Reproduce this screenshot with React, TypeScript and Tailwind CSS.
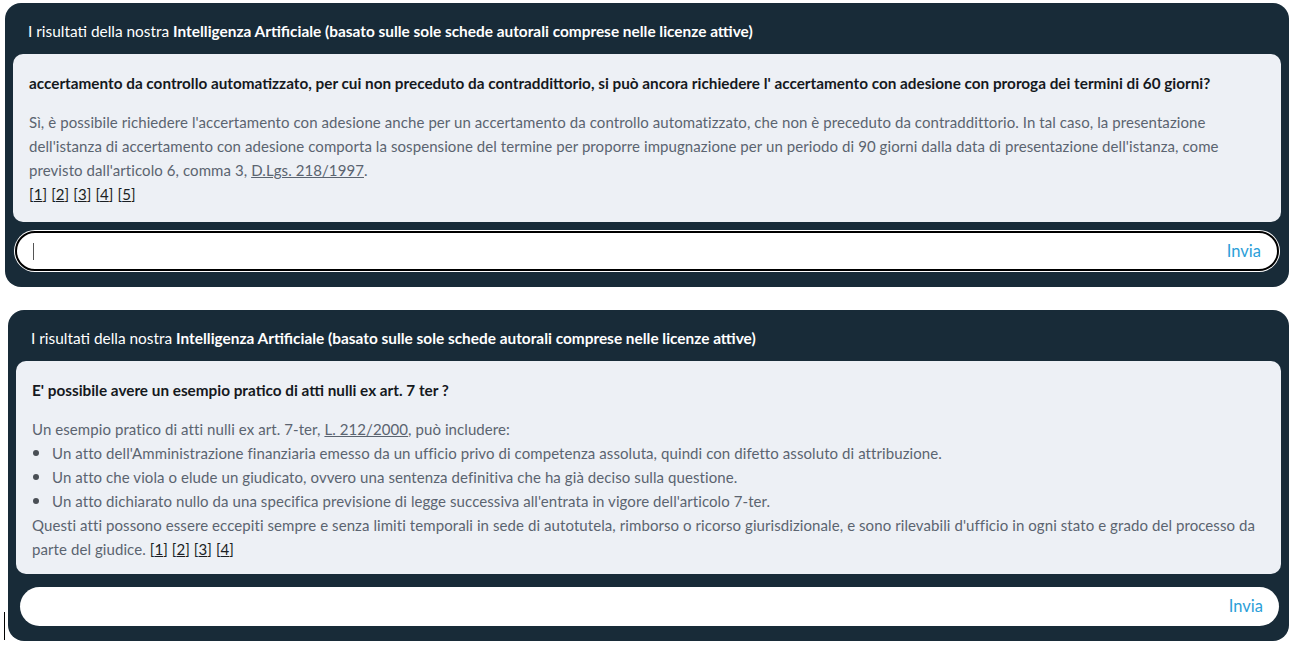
import React from 'react';

const font = { fontFamily: 'Lato, "Noto Sans", sans-serif' };

interface PanelProps {
  question: string;
  children: React.ReactNode;
  focused?: boolean;
  inputClass?: string;
  cardClass?: string;
  panelClass?: string;
}

const Ref: React.FC<{ n: number }> = ({ n }) => (
  <span className="text-[#1b1f24]">
    [<span className="underline">{n}</span>]
  </span>
);

const Bullet: React.FC<{ children: React.ReactNode }> = ({ children }) => (
  <li className="flex items-center">
    <span className="w-[6px] h-[6px] rounded-full bg-[#4a4f55] ml-px mr-[13px] shrink-0" />
    <span>{children}</span>
  </li>
);

const AiPanel: React.FC<PanelProps> = ({ question, children, focused, inputClass, cardClass, panelClass }) => {
  return (
    <div className={`bg-[#182b38] rounded-2xl px-2 ${panelClass ?? 'pb-4'}`}>
      <div className="text-white text-[15.4px] pl-[15px] pt-[18px] pb-[13px] leading-5">
        I risultati della nostra <b>Intelligenza Artificiale (basato sulle sole schede autorali comprese nelle licenze attive)</b>
      </div>
      <div className={`bg-[#edf0f5] rounded-[10px] px-4 pt-[19px] ${cardClass ?? 'pb-4'}`}>
        <div className="text-[15.3px] font-bold text-[#15191d] leading-5 mb-[17px]">{question}</div>
        <div className="text-[15px] tracking-[0.08px] text-[#5b6470] leading-6">{children}</div>
      </div>
      <div
        className={`h-10 bg-white rounded-full flex items-center pl-4 pr-4 ${inputClass ?? ''} ${
          focused ? 'border-2 border-black ring-1 ring-white' : ''
        }`}
      >
        {focused && <span className="w-px h-[17px] bg-[#555]" />}
        <span className="flex-1" />
        <span className="text-[#2b9ed8] text-[16.5px]">Invia</span>
      </div>
    </div>
  );
};

export default function App() {
  return (
    <div className="relative w-[1292px] h-[645px] bg-white" style={font}>
      <div className="pt-[3px] pl-[5px] pr-[3px]">
        <AiPanel
          focused
          inputClass="mt-[9px] ml-0.5 mr-0.5"
          question="accertamento da controllo automatizzato, per cui non preceduto da contraddittorio, si può ancora richiedere l' accertamento con adesione con proroga dei termini di 60 giorni?"
        >
          Sì, è possibile richiedere l'accertamento con adesione anche per un accertamento da controllo automatizzato, che non è preceduto da contraddittorio. In tal caso, la presentazione
          <br />
          dell'istanza di accertamento con adesione comporta la sospensione del termine per proporre impugnazione per un periodo di 90 giorni dalla data di presentazione dell'istanza, come
          <br />
          previsto dall'articolo 6, comma 3, <span className="underline">D.Lgs. 218/1997</span>.
          <br />
          <span className="flex gap-1">
            <Ref n={1} /> <Ref n={2} /> <Ref n={3} /> <Ref n={4} /> <Ref n={5} />
          </span>
        </AiPanel>
      </div>
      <div className="pt-[23px] pl-2 pr-[3px]">
        <AiPanel
          inputClass="mt-[13px] ml-1 mr-0.5 h-[39px]"
          cardClass="pb-[13px]"
          panelClass="pb-[15px]"
          question="E' possibile avere un esempio pratico di atti nulli ex art. 7 ter ?"
        >
          Un esempio pratico di atti nulli ex art. 7-ter, <span className="underline">L. 212/2000</span>, può includere:
          <ul>
            <Bullet>Un atto dell'Amministrazione finanziaria emesso da un ufficio privo di competenza assoluta, quindi con difetto assoluto di attribuzione.</Bullet>
            <Bullet>Un atto che viola o elude un giudicato, ovvero una sentenza definitiva che ha già deciso sulla questione.</Bullet>
            <Bullet>Un atto dichiarato nullo da una specifica previsione di legge successiva all'entrata in vigore dell'articolo 7-ter.</Bullet>
          </ul>
          Questi atti possono essere eccepiti sempre e senza limiti temporali in sede di autotutela, rimborso o ricorso giurisdizionale, e sono rilevabili d'ufficio in ogni stato e grado del processo da
          <br />
          parte del giudice. <Ref n={1} /> <Ref n={2} /> <Ref n={3} /> <Ref n={4} />
        </AiPanel>
      </div>
      <span className="absolute left-[4px] top-[612px] w-px h-[28px] bg-black" />
    </div>
  );
}
